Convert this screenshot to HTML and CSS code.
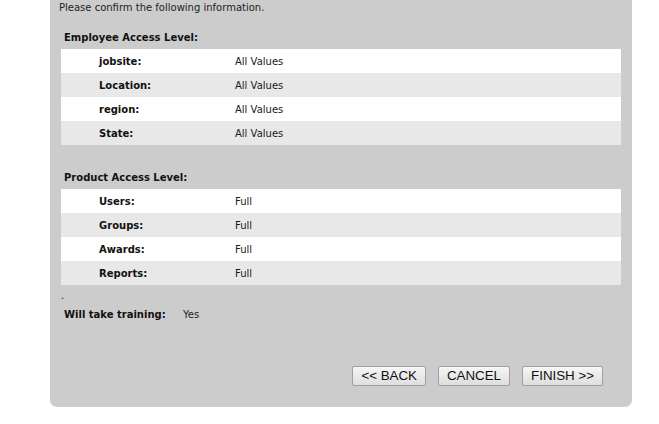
FILE: index.html
```html
<!DOCTYPE html>
<html>
<head>
<meta charset="utf-8">
<link rel="stylesheet" href="styles.css">
</head>
<body>
<div class="panel">
  <p class="intro">Please confirm the following information.</p>
  <h3 class="section-title first">Employee Access Level:</h3>
  <table class="info">
    <tr><th>jobsite:</th><td>All Values</td></tr>
    <tr><th>Location:</th><td>All Values</td></tr>
    <tr><th>region:</th><td>All Values</td></tr>
    <tr><th>State:</th><td>All Values</td></tr>
  </table>
  <h3 class="section-title">Product Access Level:</h3>
  <table class="info">
    <tr><th>Users:</th><td>Full</td></tr>
    <tr><th>Groups:</th><td>Full</td></tr>
    <tr><th>Awards:</th><td>Full</td></tr>
    <tr><th>Reports:</th><td>Full</td></tr>
  </table>
  <div class="dot">.</div>
  <div class="training"><span class="t-label">Will take training:</span><span class="t-value">Yes</span></div>
  <div class="buttons">
    <button class="btn">&lt;&lt; BACK</button>
    <button class="btn">CANCEL</button>
    <button class="btn">FINISH &gt;&gt;</button>
  </div>
</div>
</body>
</html>
```

FILE: styles.css
```css
html, body {
  margin: 0;
  padding: 0;
  background: #fff;
}
body {
  font-family: "DejaVu Sans", Verdana, sans-serif;
  font-size: 10px;
  color: #222;
}
.panel {
  margin-left: 50px;
  width: 582px;
  background: #cccccc;
  border-radius: 0 0 7px 7px;
  padding: 2px 0 21px 0;
}
.intro {
  margin: 0 0 0 9px;
  line-height: 12px;
}
.section-title {
  margin: 0 0 0 14px;
  font-size: 10px;
  font-weight: bold;
  color: #111;
  line-height: 12px;
  padding: 18px 0 5px 0;
}
.info {
  margin-left: 11px;
  width: 560px;
  border-collapse: collapse;
}
.info tr {
  height: 24px;
  background: #fff;
}
.info tr:nth-child(even) {
  background: #e8e8e8;
}
.info th {
  text-align: left;
  font-weight: bold;
  color: #111;
  padding: 0 0 0 38px;
  width: 136px;
}
.info td {
  padding: 0;
  color: #1a1a1a;
}
.info + .section-title {
  padding-top: 27px;
}
.dot {
  margin: 6px 0 0 11px;
  line-height: 10px;
  height: 10px;
}
.training {
  margin: 8px 0 0 14px;
  line-height: 12px;
  display: flex;
}
.t-label {
  font-weight: bold;
  color: #111;
  width: 119px;
}
.buttons {
  display: flex;
  justify-content: flex-end;
  gap: 12px;
  margin: 45px 29px 0 0;
}
.btn {
  font-family: "Liberation Sans", Arial, sans-serif;
  font-size: 13.33px;
  color: #111;
  height: 20px;
  padding: 0 8px;
  border: 1px solid #a0a0a0;
  border-radius: 2px;
  background: linear-gradient(#f6f6f6, #dedede);
  line-height: 18px;
}
```
